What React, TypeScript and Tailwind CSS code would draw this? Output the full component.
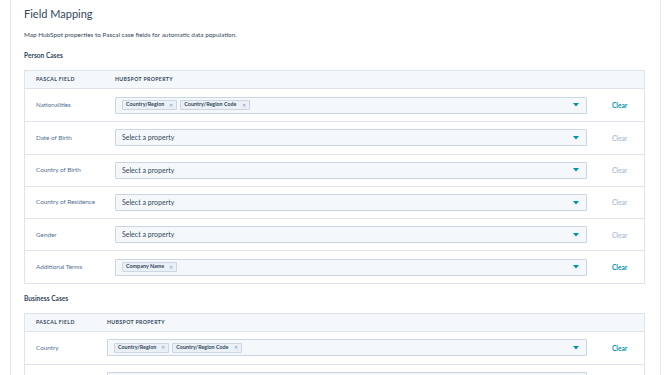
import React from "react";

const font = { fontFamily: "Lato, 'Open Sans', sans-serif" };

type Row = { label: string; tags?: string[]; hidden?: boolean };

const person: Row[] = [
  { label: "Nationalities", tags: ["Country/Region", "Country/Region Code"] },
  { label: "Date of Birth" },
  { label: "Country of Birth" },
  { label: "Country of Residence" },
  { label: "Gender" },
  { label: "Additional Terms", tags: ["Company Name"] },
];

const business: Row[] = [
  { label: "Country", tags: ["Country/Region", "Country/Region Code"] },
  { label: "", hidden: true },
];

function Caret() {
  return (
    <svg width="6" height="4" viewBox="0 0 6 4" className="shrink-0">
      <path d="M0 0 L6 0 L3 3.5 Z" fill="#0091ae" />
    </svg>
  );
}

function Tag({ text }: { text: string }) {
  return (
    <div className="flex items-center h-[10px] pl-[3px] pr-[3px] gap-[5px] bg-[#eaf0f6] border border-[#cbd6e2] rounded-[1px]">
      <span className="text-[5.4px] font-bold text-[#33475b] leading-none">{text}</span>
      <span className="text-[5px] text-[#7c98b6] leading-none">✕</span>
    </div>
  );
}

function Table({ rows, labelW }: { rows: Row[]; labelW: string }) {
  return (
    <div className="border border-[#dfe3eb] bg-white">
      <div className="flex items-center h-[18px] bg-[#f5f8fa] border-b border-[#dfe3eb] pl-[11px]">
        <div className={`${labelW} shrink-0 text-[5.2px] leading-none font-bold tracking-[0.07em] text-[#33475b]`}>PASCAL FIELD</div>
        <div className="text-[5.2px] leading-none font-bold tracking-[0.07em] text-[#33475b]">HUBSPOT PROPERTY</div>
      </div>
      {rows.map((r, i) => {
        const active = !!r.tags;
        return (
          <div
            key={i}
            className={`flex items-center h-[32.3px] pl-[11px] ${i > 0 ? "border-t border-[#dfe3eb]" : ""}`}
          >
            <div className={`${labelW} shrink-0 text-[6.3px] leading-none text-[#516f90]`}>{r.label}</div>
            <div className="flex-1 h-[17px] flex items-center justify-between bg-[#f5f8fa] border border-[#cbd6e2] rounded-[1px] pl-[6px] pr-[7px]">
              {r.hidden ? (
                <span />
              ) : r.tags ? (
                <div className="flex items-center gap-[3px]">
                  {r.tags.map((t) => (
                    <Tag key={t} text={t} />
                  ))}
                </div>
              ) : (
                <span className="text-[7px] leading-none text-[#33475b]">Select a property</span>
              )}
              <Caret />
            </div>
            <div className="w-[57px] shrink-0 pl-[25px] flex items-center">
              {!r.hidden && (
                <span className={`text-[6.6px] leading-none font-bold ${active ? "text-[#0091ae]" : "text-[#b0c1d4]"}`}>Clear</span>
              )}
            </div>
          </div>
        );
      })}
    </div>
  );
}

export default function App() {
  return (
    <div className="w-[670px] h-[375px] bg-white overflow-hidden" style={font}>
      <div className="ml-[10px] w-[651px] min-h-[375px] border-l border-r border-[#e5e8eb] pl-[13px] pr-[15px]">
        <div className="pt-[7px] text-[11px] leading-[14px] text-[#33475b]">Field Mapping</div>
        <div className="mt-[10px] text-[6.4px] leading-[8px] text-[#33475b]">
          Map HubSpot properties to Pascal case fields for automatic data population.
        </div>
        <div className="mt-[12px] text-[6.6px] leading-[8px] font-bold text-[#33475b]">Person Cases</div>
        <div className="mt-[11px]">
          <Table rows={person} labelW="w-[79px]" />
        </div>
        <div className="mt-[10px] text-[6.6px] leading-[8px] font-bold text-[#33475b]">Business Cases</div>
        <div className="mt-[11px]">
          <Table rows={business} labelW="w-[71px]" />
        </div>
      </div>
    </div>
  );
}
